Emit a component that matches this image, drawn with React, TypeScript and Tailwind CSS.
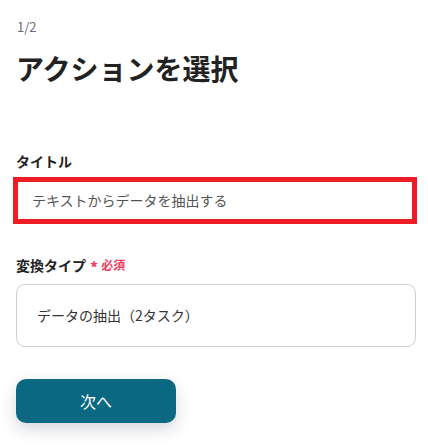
export default function App() {
  return (
    <div className="w-[428px] h-[445px] bg-white pl-4 pr-3 pt-[17px] font-['Noto_Sans_CJK_JP','Noto_Sans',sans-serif] overflow-hidden">
      {/* Step */}
      <p className="text-[13px] leading-[20px] text-[#6e6b82] pl-px">1/2</p>
      <h1 className="mt-[13px] text-[28px] leading-[36px] font-bold text-[#222]">アクションを選択</h1>

      {/* Title field */}
      <label className="block mt-[64px] text-[14px] leading-[22px] font-bold text-[#222]">タイトル</label>
      <div className="mt-[5px] -ml-[3px] w-[404px] h-[47px] border-[5px] border-[#ee1c25] bg-white flex items-center">
        <span className="pl-[14px] text-[14px] text-[#555]">テキストからデータを抽出する</span>
      </div>

      {/* Conversion type */}
      <div className="mt-[30px] flex items-center leading-[22px]">
        <span className="text-[14px] font-bold text-[#222]">変換タイプ</span>
        <span className="ml-[4px] text-[16px] font-bold text-[#f23b5f] translate-y-[2px]">*</span>
        <span className="ml-[3px] text-[12px] font-bold text-[#f23b5f]">必須</span>
      </div>
      <div className="mt-[8px] w-[400px] h-[63px] rounded-[9px] border border-[#cfcfcf] flex items-center pl-[20px]">
        <span className="text-[14px] text-[#333]">データの抽出（2タスク）</span>
      </div>

      {/* Next */}
      <button className="mt-[32px] w-[160px] h-[44px] rounded-[10px] bg-[#0b6882] text-white text-[16px] shadow-[0_6px_16px_rgba(0,40,60,0.18)]">
        次へ
      </button>
    </div>
  );
}
